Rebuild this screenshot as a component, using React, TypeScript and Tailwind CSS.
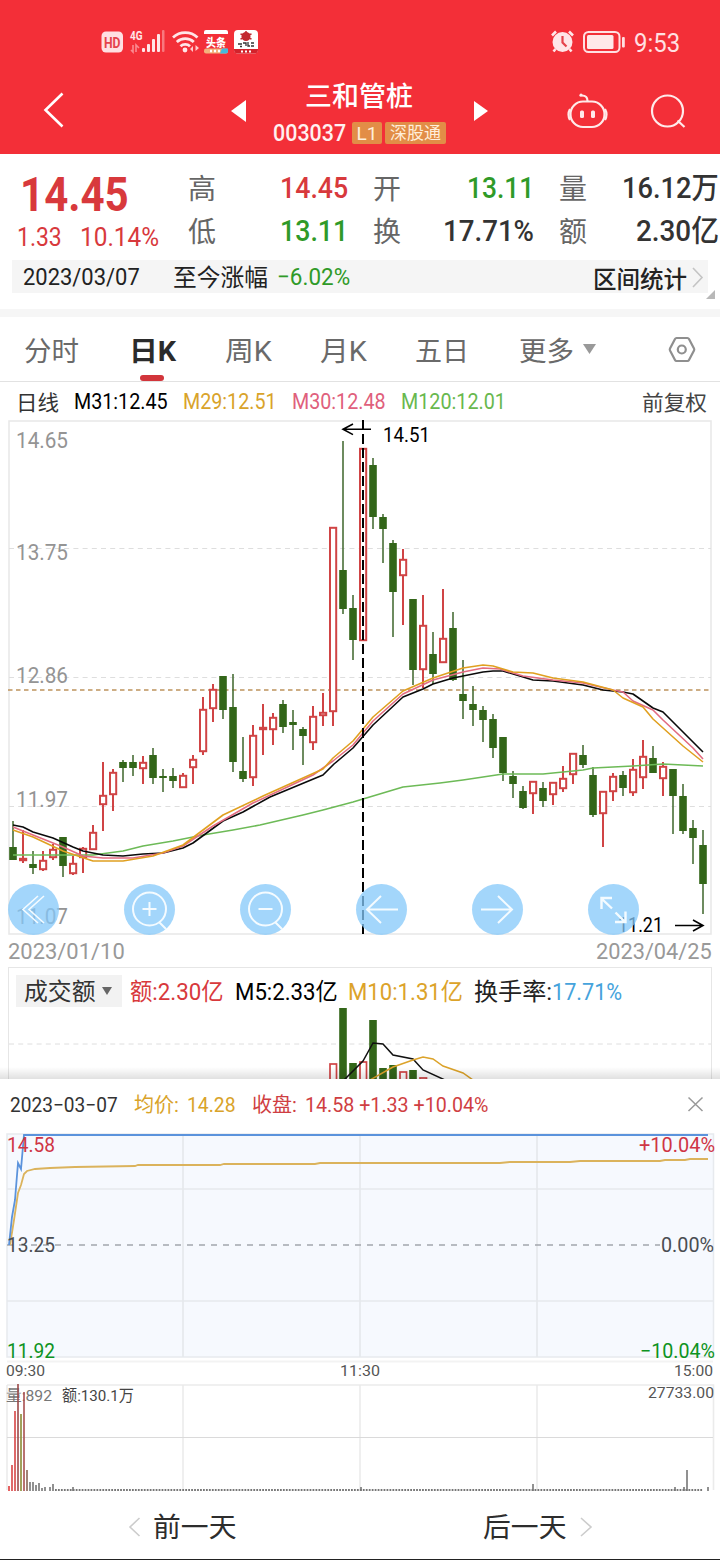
import { useLayoutEffect, useRef, useState } from 'react'
import type { ReactNode } from 'react'
import clsx from 'clsx'

// [up, open/close top, open/close bottom, high, low]
type Candle = [number, number, number, number, number]

const candles: Candle[] = [
  [0, 847, 860, 821, 860], [1, 858, 861, 830, 863], [0, 864, 868, 851, 874], [1, 860, 870, 851, 871],
  [1, 849, 858, 844, 860], [0, 837, 866, 837, 877], [1, 863, 874, 856, 875], [1, 848, 858, 847, 873],
  [1, 832, 850, 825, 850], [1, 795, 805, 762, 831], [1, 772, 795, 769, 811], [0, 762, 768, 760, 782],
  [0, 762, 768, 755, 776], [1, 762, 769, 756, 784], [0, 755, 778, 748, 784], [0, 776, 778, 769, 792],
  [0, 776, 781, 768, 788], [1, 775, 788, 773, 788], [1, 759, 768, 755, 784], [1, 709, 752, 697, 755],
  [1, 689, 709, 684, 722], [0, 676, 710, 676, 719], [0, 707, 762, 674, 772], [0, 771, 779, 737, 782],
  [1, 735, 778, 725, 786], [1, 727, 730, 704, 755], [1, 717, 730, 713, 745], [0, 704, 727, 700, 733],
  [0, 722, 725, 710, 750], [0, 729, 736, 727, 765], [1, 716, 743, 706, 750], [1, 712, 716, 693, 726],
  [1, 527, 712, 527, 726], [0, 570, 609, 441, 614], [0, 608, 640, 595, 660], [1, 448, 641, 448, 641],
  [0, 465, 517, 458, 529], [0, 517, 529, 514, 563], [0, 543, 592, 540, 637], [1, 559, 576, 549, 625],
  [0, 599, 670, 599, 685], [1, 625, 670, 595, 688], [0, 654, 674, 632, 684], [1, 638, 663, 589, 663],
  [0, 628, 680, 612, 681], [0, 694, 701, 660, 719], [0, 704, 710, 686, 726], [0, 710, 720, 706, 742],
  [0, 719, 748, 714, 758], [0, 737, 773, 737, 781], [0, 776, 784, 771, 798], [0, 791, 808, 786, 809],
  [1, 781, 794, 781, 814], [0, 788, 801, 782, 807], [1, 782, 795, 782, 805], [1, 778, 789, 766, 792],
  [1, 753, 775, 753, 784], [0, 755, 765, 745, 768], [0, 775, 815, 767, 817], [1, 791, 814, 791, 847],
  [1, 776, 792, 773, 801], [0, 775, 788, 771, 796], [1, 769, 793, 759, 796], [1, 756, 778, 740, 789],
  [0, 758, 773, 746, 773], [1, 766, 779, 762, 796], [0, 769, 796, 769, 834], [0, 796, 831, 784, 834],
  [0, 828, 838, 820, 864], [0, 845, 884, 830, 914],
]

const averages = [
  { color: '#6dba57', points: '13,855 93,855 123,851 143,846 173,841 203,835 233,830 260,825 303,815 323,810 353,802 363,799 403,787 440,783 463,780 503,774 543,774 583,770 593,768 633,766 663,764 703,766' },
  { color: '#0a0a0a', points: '13,825 23,827 33,832 53,838 73,847 83,851 103,855 123,856 143,854 163,853 183,848 193,843 223,821 243,812 270,797 323,775 334,764 353,748 373,725 403,697 423,689 433,684 453,678 463,676 483,672 493,671 503,671 533,680 553,681 583,685 603,690 623,692 633,694 653,708 663,712 703,752' },
  { color: '#e26b80', points: '13,827 33,835 63,847 83,856 103,858 133,858 163,853 183,846 213,826 253,803 313,775 333,761 353,745 373,721 403,694 433,680 463,672 483,668 500,669 523,676 553,680 583,683 613,690 623,692 633,701 653,710 663,720 693,748 703,759' },
  { color: '#e0a020', points: '13,830 33,837 63,851 93,861 123,861 153,856 183,845 223,815 263,796 323,769 333,758 353,741 373,717 403,691 433,678 463,668 483,665 493,666 513,672 533,673 553,678 583,682 613,690 623,698 643,707 653,719 683,746 703,762' },
]

const priceLabels = [
  { text: '14.65', y: 448 },
  { text: '13.75', y: 560 },
  { text: '12.86', y: 683 },
  { text: '11.97', y: 807 },
  { text: '11.07', y: 924 },
]

const amountBars = [
  { x: 333, y: 1064, up: true },
  { x: 343, y: 1008, up: false },
  { x: 353, y: 1063, up: false },
  { x: 363, y: 1062, up: true },
  { x: 373, y: 1020, up: false },
  { x: 383, y: 1068, up: false },
  { x: 393, y: 1065, up: false },
  { x: 403, y: 1072, up: true },
  { x: 413, y: 1070, up: false },
  { x: 423, y: 1078, up: true },
]

const minuteBars = [
  { x: 9, y: 1486, color: '#e03c3c' }, { x: 12, y: 1465, color: '#d84545' }, { x: 15, y: 1411, color: '#d84545' },
  { x: 18, y: 1384, color: '#9c4a4a' }, { x: 21, y: 1414, color: '#8a8a35' }, { x: 24, y: 1392, color: '#a85050' },
  { x: 27, y: 1470, color: '#8a6455' }, { x: 30, y: 1482, color: '#777' }, { x: 33, y: 1482, color: '#777' },
  { x: 36, y: 1485, color: '#777' }, { x: 39, y: 1483, color: '#777' }, { x: 42, y: 1488, color: '#777' },
  { x: 45, y: 1487, color: '#777' }, { x: 50, y: 1487, color: '#777' }, { x: 53, y: 1484, color: '#777' },
  { x: 73, y: 1487, color: '#777' }, { x: 361, y: 1487, color: '#777' }, { x: 533, y: 1484, color: '#777' },
  { x: 675, y: 1487, color: '#777' }, { x: 684, y: 1487, color: '#777' }, { x: 687, y: 1470, color: '#777' },
  { x: 708, y: 1487, color: '#777' },
]

// Squeezes its text to the width given by the class name
function Fit({ className, children }: { className?: string; children: ReactNode }) {
  const outer = useRef<HTMLSpanElement>(null)
  const inner = useRef<HTMLSpanElement>(null)
  const [scale, setScale] = useState(1)

  useLayoutEffect(() => {
    if (outer.current && inner.current) {
      setScale(outer.current.clientWidth / inner.current.offsetWidth)
    }
  }, [children])

  return (
    <span ref={outer} className={clsx('block shrink-0 whitespace-nowrap', className)}>
      <span ref={inner} className="inline-block origin-left align-top" style={{ transform: `scaleX(${scale})` }}>
        {children}
      </span>
    </span>
  )
}

function StatusBar() {
  return (
    <div className="flex h-[72px] items-start pt-[28px]">
      <svg className="ml-[100px] shrink-0" width="162" height="28" viewBox="100 28 162 28">
        <rect x="101.5" y="31.5" width="21.5" height="21" rx="4.5" fill="#ffe0e2" />
        <text x="104" y="47.5" fontSize="14" fontWeight="700" fill="#e5434b" textLength="16.5" lengthAdjust="spacingAndGlyphs">HD</text>
        <text x="130" y="40" fontSize="12.5" fontWeight="700" fill="#ffe6e8" textLength="12.5" lengthAdjust="spacingAndGlyphs">4G</text>
        <path d="M133 45v7l-2-2M136 52v-7l3 3" stroke="#fa8a90" strokeWidth="1.6" fill="none" />
        <g fill="#ffe6e8">
          <rect x="142" y="48" width="3" height="4" rx="1" />
          <rect x="147" y="44" width="3" height="8" rx="1" />
          <rect x="152" y="39" width="3" height="13" rx="1" />
          <rect x="157" y="34" width="3" height="18" rx="1" />
          <rect x="162" y="30" width="2.5" height="22" rx="1" opacity=".4" />
        </g>
        <g fill="none" stroke="#ffe6e8" strokeWidth="2.8">
          <path d="M173 37.5a18 18 0 0 1 24.500 0" />
          <path d="M176.800 42a12.500 12.500 0 0 1 17 0" />
          <path d="M180.500 46.300a7 7 0 0 1 9.500 0" />
        </g>
        <circle cx="185" cy="50" r="2.4" fill="#ffe6e8" />
        <path d="M193 46v6l-3-3zM195.500 45v6l3.500-3z" fill="#ffc9cc" />
        <path d="M204 34v-2q0-2 2-2h20q2 0 2 2v2z" fill="#fff" />
        <text x="206" y="46.500" fontSize="11" fontWeight="900" fill="#fff" textLength="20" lengthAdjust="spacingAndGlyphs">头条</text>
        <rect x="204" y="48.500" width="24" height="5" rx="2" fill="#f3b27c" />
        <path d="M222 48.500h6v3q0 2-2 2h-6z" fill="#45b9dc" />
        <path d="M210 51h2m2 0h2m2 0h2" stroke="#fff" strokeWidth="2.500" />
        <rect x="234" y="30" width="24" height="23.500" rx="4" fill="#fff" />
        <path d="M234 49h24v1q0 3.500-4 3.500h-16q-4 0-4-3.500z" fill="#d3222b" />
        <circle cx="246" cy="36.500" r="4.500" fill="#c22931" />
        <path d="M240.500 34l3 1M251.500 34l-3 1M240.500 39l3-1M251.500 39l-3-1M246 31v2" stroke="#c22931" strokeWidth="1.500" />
        <path d="M238 44h4M243 43h3v3M248 42v4h2M251 43h3M240 46.500h2M251 46h3" stroke="#333" strokeWidth="1.300" fill="none" />
        <path d="M241 51.500h2m2 0h2m2 0h2" stroke="#fff" strokeWidth="1.800" />
      </svg>
      <svg className="ml-[286px] shrink-0" width="80" height="28" viewBox="548 28 80 28">
        <circle cx="562.5" cy="42" r="10" fill="#ffe6e8" />
        <path d="M562.500 36v6.500l4 4" stroke="#e5434b" strokeWidth="2.200" fill="none" />
        <path d="M552 35.500l4-4M573 35.500l-4-4M555.500 49l-2 2.500M569.500 49l2 2.500" stroke="#ffe6e8" strokeWidth="2.600" />
        <rect x="584" y="32" width="35.500" height="20" rx="4.500" fill="none" stroke="#ffe0e2" strokeWidth="2" />
        <rect x="587" y="35" width="26.500" height="14" rx="1.500" fill="#ffe8e9" />
        <rect x="622" y="37" width="2.800" height="10.500" rx="1" fill="#ffe0e2" />
      </svg>
      <Fit className="ml-[6px] w-[46px] text-[26px] leading-[30px] text-[#ffe0e2]">9:53</Fit>
    </div>
  )
}

function TitleBar() {
  return (
    <div className="flex h-[82px] items-start">
      <svg className="ml-[40px] mt-[18px] shrink-0" width="28" height="40" viewBox="40 90 28 40">
        <path d="M62.500 93.500L45.500 110l17 16.500" fill="none" stroke="#fff" strokeWidth="2.600" />
      </svg>
      <svg className="ml-[160px] mt-[27px] shrink-0" width="22" height="24" viewBox="228 99 22 24">
        <path d="M231 111l15-11v22z" fill="#fff" />
      </svg>
      <div className="ml-[23px] flex w-[175px] flex-col">
        <Fit className="ml-[32px] mt-[9px] w-[108px] text-[27px] font-medium leading-[32px]">三和管桩</Fit>
        <div className="mt-[8px] flex h-[24px] items-center">
          <Fit className="w-[73px] text-[23.500px] font-medium leading-[24px] text-[#fff0f0]">003037</Fit>
          <span className="ml-[6px] flex h-[22px] w-[30px] items-center justify-center rounded-[2px] bg-[#e28d47] text-[19px] leading-none text-[#ffeeda]">
            L1
          </span>
          <span className="ml-[3px] flex h-[22px] w-[61px] items-center justify-center whitespace-nowrap rounded-[2px] bg-[#e28d47] text-[17px] leading-[22px] text-[#ffeeda]">
            深股通
          </span>
        </div>
      </div>
      <svg className="ml-[23px] mt-[27px] shrink-0" width="20" height="24" viewBox="471 99 20 24">
        <path d="M488 111l-14-10v20z" fill="#fff" />
      </svg>
      <svg className="ml-[74px] mt-[18px] shrink-0" width="44" height="40" viewBox="565 90 44 40" fill="none" stroke="#ffeaea" strokeWidth="2.200">
        <rect x="570.500" y="101.500" width="34" height="25.500" rx="12.500" />
        <path d="M570 109q-3 5.500 0 11M605 109q3 5.500 0 11" />
        <path d="M587.500 101q0-5.500-5.500-5.500" />
        <circle cx="581" cy="95.200" r="1.600" fill="#ffeaea" stroke="none" />
        <rect x="580" y="110.500" width="4" height="7.500" rx="1.500" fill="#ffeaea" stroke="none" />
        <rect x="591" y="110.500" width="4" height="7.500" rx="1.500" fill="#ffeaea" stroke="none" />
      </svg>
      <svg className="ml-[39px] mt-[18px] shrink-0" width="42" height="40" viewBox="648 90 42 40" fill="none" stroke="#ffeaea" strokeWidth="2.200">
        <circle cx="667.500" cy="111" r="15.500" />
        <path d="M677.500 120.500l7 6.500" />
      </svg>
    </div>
  )
}

function Quote() {
  return (
    <div className="flex h-[106px] items-start overflow-hidden text-[#333]">
      <div className="w-[188px] shrink-0 text-[#d8393c]">
        <Fit className="ml-[20px] mt-[16px] w-[109px] text-[49px] font-bold leading-[50px]">14.45</Fit>
        <div className="mt-[4px] flex text-[25px] leading-[27px]">
          <Fit className="ml-[17px] w-[45px]">1.33</Fit>
          <Fit className="ml-[18px] w-[79px]">10.14%</Fit>
        </div>
      </div>
      <div className="w-[160px] shrink-0 pt-[13px]">
        <QuoteRow label="高"><Fit className="w-[68px] text-[#d8393c]">14.45</Fit></QuoteRow>
        <QuoteRow label="低"><Fit className="w-[68px] text-[#2f9a28]">13.11</Fit></QuoteRow>
      </div>
      <div className="ml-[25px] w-[161px] shrink-0 pt-[13px]">
        <QuoteRow label="开"><Fit className="w-[67px] text-[#2f9a28]">13.11</Fit></QuoteRow>
        <QuoteRow label="换"><Fit className="w-[91px]">17.71%</Fit></QuoteRow>
      </div>
      <div className="ml-[25px] w-[160px] shrink-0 pt-[13px]">
        <QuoteRow label="量"><Fit className="w-[97px]">16.12万</Fit></QuoteRow>
        <QuoteRow label="额"><Fit className="w-[83px]">2.30亿</Fit></QuoteRow>
      </div>
    </div>
  )
}

function QuoteRow({ label, children }: { label: string; children: ReactNode }) {
  return (
    <div className="flex h-[43px] items-center justify-between">
      <span className="pt-[2px] text-[28px] leading-[43px] text-[#666]">{label}</span>
      <span className="text-[29.500px] font-medium leading-[43px]">{children}</span>
    </div>
  )
}

function RangeBar() {
  return (
    <div className="flex h-[49px] items-start">
      <div className="ml-[12px] flex h-[33px] w-[696px] shrink-0 items-center bg-[#f5f5f5] text-[24px] leading-[33px] text-[#222]">
        <Fit className="ml-[11px] mt-[2px] w-[117px]">2023/03/07</Fit>
        <Fit className="ml-[33px] mt-[4px] w-[95px]">至今涨幅</Fit>
        <Fit className="ml-[9px] mt-[2px] w-[73px] text-[#2f9a28]">−6.02%</Fit>
        <Fit className="ml-[243px] mt-[7px] w-[94px] font-medium">区间统计</Fit>
        <svg className="ml-[4px] mt-[1px] shrink-0" width="14" height="22" viewBox="0 0 14 22">
          <path d="M2 2l9 9.500L2 21" fill="none" stroke="#c4c4c4" strokeWidth="1.600" />
        </svg>
      </div>
      <svg className="-ml-[2px] mt-[30px] shrink-0" width="10" height="10" viewBox="0 0 10 10">
        <path d="M9 0v9H0z" fill="#b8b8b8" />
      </svg>
    </div>
  )
}

function Tabs() {
  return (
    <div className="flex h-[73px] items-start border-b border-t-[8px] border-b-[#e2e2e2] border-t-[#f6f6f6] text-[27px] leading-[40px] text-[#6a6a6a]">
      <Fit className="ml-[24px] mt-[15px] w-[55px]">分时</Fit>
      <div className="ml-[50px] mt-[15px] w-[47px] shrink-0 font-bold text-[#2b2b2b]">
        <Fit className="w-[47px]">日K</Fit>
        <div className="ml-[11px] mt-[3px] h-[6px] w-[24px] rounded-[3px] bg-[#d2353b]" />
      </div>
      <Fit className="ml-[49px] mt-[15px] w-[47px]">周K</Fit>
      <Fit className="ml-[48px] mt-[15px] w-[47px]">月K</Fit>
      <Fit className="ml-[48px] mt-[15px] w-[54px]">五日</Fit>
      <Fit className="ml-[50px] mt-[15px] w-[55px]">更多</Fit>
      <svg className="ml-[8px] mt-[26px] shrink-0" width="16" height="12" viewBox="0 0 16 12">
        <path d="M1 1h13L7.500 11z" fill="#999" />
      </svg>
      <svg className="ml-[69px] mt-[18px] shrink-0" width="30" height="30" viewBox="0 0 30 30" fill="none" stroke="#8f8f8f" strokeWidth="2.200">
        <path d="M9.500 3h11q1 0 1.500 1l5 9.500q.500 1 0 2l-5 9.500q-.500 1-1.500 1h-11q-1 0-1.500-1l-5-9.500q-.500-1 0-2l5-9.500q.500-1 1.500-1z" />
        <circle cx="14.800" cy="14.500" r="4" />
      </svg>
    </div>
  )
}

function Averages() {
  return (
    <div className="flex h-[38px] items-center text-[22px] leading-[38px]">
      <Fit className="ml-[16px] mt-[3px] w-[43px] text-[21px] text-[#333]">日线</Fit>
      <Fit className="ml-[15px] mt-[2px] w-[94px] text-black">M31:12.45</Fit>
      <Fit className="ml-[15px] mt-[2px] w-[94px] text-[#d9a32a]">M29:12.51</Fit>
      <Fit className="ml-[15px] mt-[2px] w-[94px] text-[#e0607c]">M30:12.48</Fit>
      <Fit className="ml-[15px] mt-[2px] w-[105px] text-[#68b84e]">M120:12.01</Fit>
      <Fit className="ml-[136px] mt-[4px] w-[65px] text-[21px] text-[#444]">前复权</Fit>
    </div>
  )
}

function RoundButton({ children }: { children: ReactNode }) {
  return (
    <button className="size-[51px] rounded-full bg-[#84c8fa]/75">
      <svg width="51" height="51" viewBox="0 0 51 51" fill="none" stroke="#f4fbff" strokeWidth="2">
        {children}
      </svg>
    </button>
  )
}

function KLine() {
  return (
    <div className="relative h-[515px]">
      <svg className="block overflow-visible" width="720" height="520" viewBox="0 420 720 520">
        <rect x="9" y="421" width="702" height="513" fill="#fff" stroke="#e9e9e9" strokeWidth="1.600" />
        {[548.5, 677.5, 806.5].map(y => (
          <line key={y} x1="9" x2="711" y1={y} y2={y} stroke="#dedede" strokeDasharray="5 4.200" />
        ))}
        <g fontSize="22.500" fill="#949494">
          {priceLabels.map(label => (
            <text key={label.text} x="16" y={label.y} textLength="52" lengthAdjust="spacingAndGlyphs">{label.text}</text>
          ))}
        </g>
        <line x1="8" x2="711" y1="690" y2="690" stroke="#bd935c" strokeWidth="1.700" strokeDasharray="4.500 3.500" />
        {candles.map(([up, top, bottom, high, low], i) => {
          const x = 13 + i * 10
          return up ? (
            <g key={i} stroke="#d04445" strokeWidth="2">
              <path d={`M${x} ${high}V${top}M${x} ${bottom}V${low}`} />
              <rect x={x - 3} y={top + 0.8} width="6.200" height={Math.max(bottom - top - 1.6, 1)} fill="#fff" />
            </g>
          ) : (
            <g key={i} fill="#336619">
              <rect x={x - 0.8} y={high} width="1.600" height={low - high} fill="#4a6f38" />
              <rect x={x - 3.8} y={top} width="7.600" height={bottom - top} />
            </g>
          )
        })}
        {averages.map(line => (
          <polyline key={line.color} points={line.points} fill="none" stroke={line.color} strokeWidth="1.600" strokeLinejoin="round" />
        ))}
        <line x1="363" x2="363" y1="420" y2="934" stroke="#000" strokeWidth="2" strokeDasharray="10 4" />
        <path d="M371 429.300H344M353 424l-10 5.300 10 5.300" fill="none" stroke="#000" strokeWidth="1.600" />
        <text x="383" y="442" fontSize="20" textLength="47" lengthAdjust="spacingAndGlyphs">14.51</text>
        <text x="618" y="932" fontSize="20" textLength="45" lengthAdjust="spacingAndGlyphs">11.21</text>
        <path d="M675 925.500h27M693 920l10 5.500-10 5.500" fill="none" stroke="#000" strokeWidth="1.600" />
      </svg>
      <div className="absolute left-[8px] top-[464px] flex gap-[65px]">
        <RoundButton><path d="M30 12L15 25.500 30 39M36 12L21 25.500 36 39" strokeWidth="1.600" /></RoundButton>
        <RoundButton>
          <circle cx="25.500" cy="25" r="16.500" />
          <path d="M25.500 18v14M18.500 25h14M35 38l7 7" />
        </RoundButton>
        <RoundButton>
          <circle cx="25.500" cy="25" r="16.500" />
          <path d="M18.500 25h14M35 38l7 7" />
        </RoundButton>
        <RoundButton><path d="M42 25.500H11M25 12L11 25.500 25 39" /></RoundButton>
        <RoundButton><path d="M9 25.500h31M26 12l14 13.500L26 39" /></RoundButton>
        <RoundButton><path d="M24 24.500L14 15M13.500 25V14H24M27.500 28.500l9 9M37.500 27.500v10.500H27" strokeWidth="2.400" /></RoundButton>
      </div>
    </div>
  )
}

function Amount() {
  return (
    <div className="relative mt-[1px] h-[112px]">
      <div className="mx-[8px] flex h-[112px] items-start border border-b-0 border-[#e6e6e6] text-[23.500px] leading-[32px]">
        <div className="ml-[7px] mt-[7px] flex h-[32px] w-[106px] shrink-0 items-center bg-[#f2f2f2] text-[#333]">
          <Fit className="ml-[8px] mt-[2px] w-[72px]">成交额</Fit>
          <svg className="ml-[5px]" width="12" height="9" viewBox="0 0 12 9">
            <path d="M1 0h10L6 8z" fill="#666" />
          </svg>
        </div>
        <Fit className="ml-[8px] mt-[8px] w-[94px] text-[#d8393c]">额:2.30亿</Fit>
        <Fit className="ml-[11px] mt-[8px] w-[103px] text-black">M5:2.33亿</Fit>
        <Fit className="ml-[10px] mt-[8px] w-[115px] text-[#dca32a]">M10:1.31亿</Fit>
        <Fit className="ml-[11px] mt-[8px] w-[78px] text-[#222]">换手率:</Fit>
        <Fit className="mt-[8px] w-[70px] text-[#45a3dc]">17.71%</Fit>
      </div>
      <svg className="absolute left-0 top-[37px]" width="720" height="75" viewBox="0 1004 720 75">
        <line x1="9" x2="711" y1="1044" y2="1044" stroke="#dedede" strokeDasharray="5 4.200" />
        {amountBars.map(bar =>
          bar.up ? (
            <rect key={bar.x} x={bar.x - 3} y={bar.y} width="6.500" height="30" fill="#fff" stroke="#d04445" strokeWidth="1.700" />
          ) : (
            <rect key={bar.x} x={bar.x - 3.8} y={bar.y} width="7.600" height="90" fill="#336619" />
          )
        )}
        <polyline points="343,1081 363,1061 373,1043 383,1044 393,1055 413,1059 423,1070 445,1080" fill="none" stroke="#111" strokeWidth="1.500" />
        <polyline points="370,1080 393,1067 413,1060 423,1057 433,1059 443,1066 463,1073 473,1080" fill="none" stroke="#dca32a" strokeWidth="1.500" />
      </svg>
      <div className="absolute inset-x-0 bottom-0 h-[12px] bg-gradient-to-b from-black/0 to-black/12" />
    </div>
  )
}

function DaySheet() {
  return (
    <div className="h-[481px] border-b border-[#222] bg-white">
      <div className="flex h-[52px] items-center text-[20.500px] leading-[52px]">
        <Fit className="ml-[10px] w-[108px] text-[#333]">2023−03−07</Fit>
        <Fit className="ml-[16px] w-[45px] text-[#d9a32a]">均价:</Fit>
        <Fit className="ml-[8px] w-[49px] text-[#d9a32a]">14.28</Fit>
        <Fit className="ml-[16px] w-[45px] text-[#cf3e42]">收盘:</Fit>
        <Fit className="ml-[8px] w-[183px] text-[#cf3e42]">14.58 +1.33 +10.04%</Fit>
        <svg className="-mt-[1px] ml-[199px] shrink-0" width="17" height="17" viewBox="0 0 17 17">
          <path d="M1.500 1.500l14 13.500M15.500 1.500l-14 13.500" stroke="#999" strokeWidth="1.500" />
        </svg>
      </div>
      <svg className="block" width="720" height="362" viewBox="0 1131 720 362">
        <rect x="7" y="1134" width="706.500" height="223" fill="#f6f9fe" stroke="#e7eaee" strokeWidth="1.500" />
        <g stroke="#e6e9ed" strokeWidth="1.700">
          <path d="M183 1134v223M360 1134v223M537 1134v223M7 1189h706M7 1301h706" />
        </g>
        <path d="M7 1361.500h706" stroke="#f3f3f3" strokeWidth="2" />
        <path d="M7 1385H713.500V1490M7 1385V1490M183 1385v106M360 1385v106M537 1385v106" fill="none" stroke="#ebebeb" strokeWidth="1.600" />
        <path d="M7 1437.500h706" stroke="#dadada" />
        <line x1="7" x2="660" y1="1245" y2="1245" stroke="#a3a7ad" strokeWidth="1.600" strokeDasharray="6 6" />
        <polyline points="10,1245 14,1220 18,1193 21,1185 24,1174 27,1171 35,1169 50,1168 75,1167 135,1166 138,1165 220,1165 224,1164 315,1164 320,1163 500,1163 510,1162 570,1162 580,1161 660,1161 665,1160 685,1160 690,1159 708,1159" fill="none" stroke="#dbb35c" strokeWidth="1.800" />
        <polyline points="9,1245 12,1217 15,1200 18,1163 21,1169 24,1135 708,1135" fill="none" stroke="#5b93dc" strokeWidth="1.800" />
        <g fontSize="20.500">
          <text x="7" y="1152" fill="#cf3545" textLength="48" lengthAdjust="spacingAndGlyphs">14.58</text>
          <text x="7" y="1252" fill="#4a4d52" textLength="48" lengthAdjust="spacingAndGlyphs">13.25</text>
          <text x="7" y="1358" fill="#0d9321" textLength="48" lengthAdjust="spacingAndGlyphs">11.92</text>
          <text x="639" y="1152" fill="#cf3545" textLength="76" lengthAdjust="spacingAndGlyphs">+10.04%</text>
          <text x="661" y="1252" fill="#4a4d52" textLength="53" lengthAdjust="spacingAndGlyphs">0.00%</text>
          <text x="640" y="1358" fill="#0d9321" textLength="75" lengthAdjust="spacingAndGlyphs">−10.04%</text>
        </g>
        <g fontSize="15.500" fill="#555">
          <text x="6" y="1376" textLength="39" lengthAdjust="spacingAndGlyphs">09:30</text>
          <text x="340" y="1376" textLength="40" lengthAdjust="spacingAndGlyphs">11:30</text>
          <text x="674" y="1376" textLength="39" lengthAdjust="spacingAndGlyphs">15:00</text>
          <text x="6" y="1401" fill="#777" textLength="46" lengthAdjust="spacingAndGlyphs">量:892</text>
          <text x="62" y="1401" fill="#444" textLength="72" lengthAdjust="spacingAndGlyphs">额:130.1万</text>
          <text x="648" y="1398" textLength="66" lengthAdjust="spacingAndGlyphs">27733.00</text>
        </g>
        {minuteBars.map(bar => (
          <rect key={bar.x} x={bar.x - 0.8} y={bar.y} width="1.600" height={1491 - bar.y} fill={bar.color} />
        ))}
        <line x1="55" x2="703" y1="1490" y2="1490" stroke="#777" strokeWidth="1.800" strokeDasharray="1.800 1.160" />
      </svg>
      <div className="flex h-[65px] items-center text-[27.500px] leading-[40px] text-[#2d2d2d]">
        <svg className="ml-[128px] mt-[2px] shrink-0" width="13" height="20" viewBox="0 0 13 20">
          <path d="M11.500 1L2 10l9.500 9" fill="none" stroke="#ccc" strokeWidth="1.600" />
        </svg>
        <Fit className="ml-[12px] mt-[5px] w-[84px]">前一天</Fit>
        <Fit className="ml-[246px] mt-[5px] w-[84px]">后一天</Fit>
        <svg className="ml-[13px] mt-[2px] shrink-0" width="13" height="20" viewBox="0 0 13 20">
          <path d="M1 1l10 9-10 9" fill="none" stroke="#ccc" strokeWidth="1.600" />
        </svg>
      </div>
    </div>
  )
}

export default function App() {
  return (
    <div className="h-[1560px] w-[720px] overflow-hidden bg-white font-[Roboto,'Noto_Sans_CJK_SC',sans-serif]">
      <header className="h-[154px] bg-[#f32f38] text-white">
        <StatusBar />
        <TitleBar />
      </header>
      <Quote />
      <RangeBar />
      <Tabs />
      <Averages />
      <KLine />
      <div className="flex h-[31px] items-center justify-between pl-[8px] pr-[8px] text-[22.500px] leading-[31px] text-[#999]">
        <Fit className="mt-[2px] w-[117px]">2023/01/10</Fit>
        <Fit className="mt-[2px] w-[116px]">2023/04/25</Fit>
      </div>
      <Amount />
      <DaySheet />
    </div>
  )
}
